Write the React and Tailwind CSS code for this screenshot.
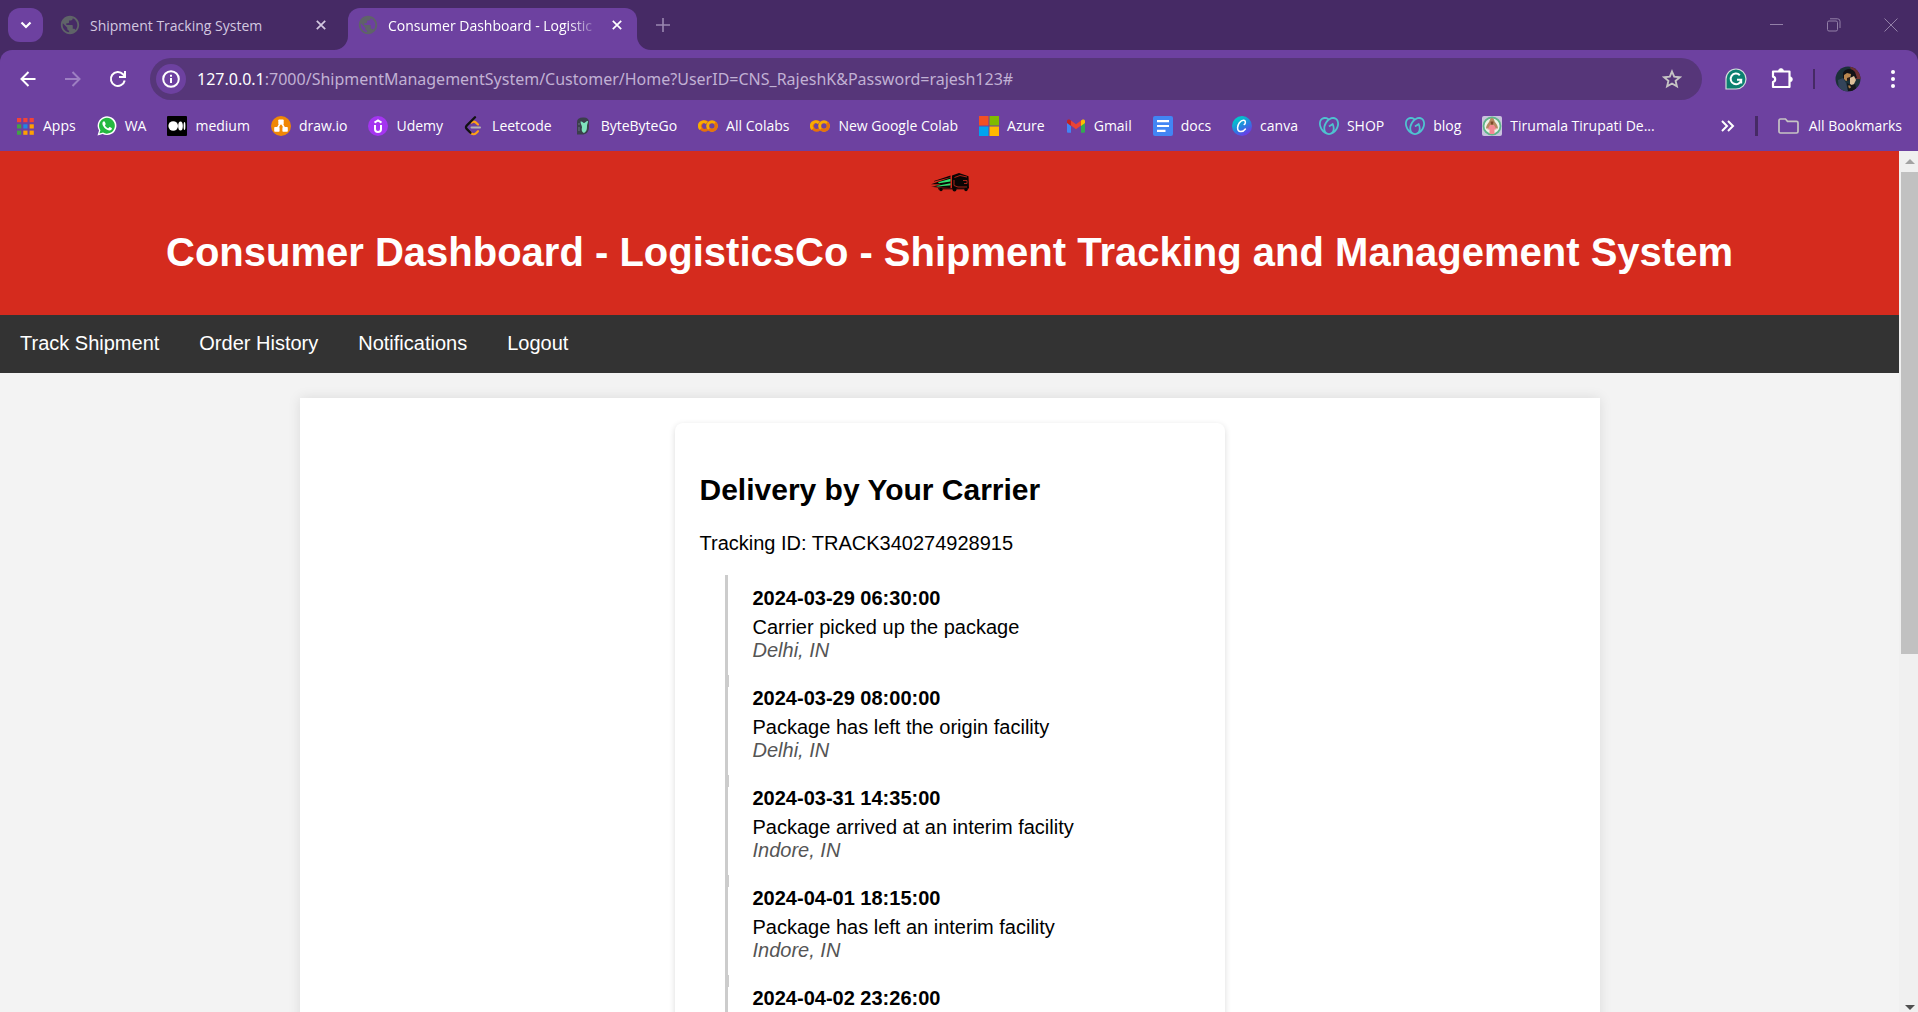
import React from "react";
import { SiGodaddy } from "react-icons/si";
import { MdPublic } from "react-icons/md";

const chromeFont = "font-['Open_Sans','Noto_Sans',sans-serif]";

const AppsIcon = () => (
  <svg viewBox="0 0 20 20" className="size-5">
    {[
      ["#f44336", "#f44336", "#f44336"],
      ["#43a047", "#1e88e5", "#ffa000"],
      ["#43a047", "#ffa000", "#ffa000"],
    ].map((row, r) =>
      row.map((c, i) => <rect key={r + "-" + i} x={2 + i * 6.3} y={2 + r * 6.3} width="4.2" height="4.2" fill={c} />)
    )}
  </svg>
);
const WhatsAppIcon = () => (
  <svg viewBox="0 0 20 20" className="size-5">
    <path d="M.5 19.5 2 14.6A9.4 9.4 0 1 1 5.6 18Z" fill="#fff" />
    <path d="m2.4 17.6 1-3.4A7.9 7.9 0 1 1 6 16.6Z" fill="#25b940" />
    <path d="M7 5.2c-.5 0-1.6.8-1.6 2.3 0 3 4 7 7.200 7 1.500 0 2.300-1 2.300-1.900 0-.4-.2-.5-2.300-1.500-.4-.1-.8 1.200-1.300 1.200-.6 0-3.300-2.200-3.300-2.900 0-.4.8-.9.700-1.400C8.200 6.500 7.800 5.200 7 5.200Z" fill="#fff" />
  </svg>
);
const MediumIcon = () => (
  <svg viewBox="0 0 20 20" className="size-5">
    <rect width="20" height="20" rx="1" fill="#000" />
    <circle cx="6.200" cy="10" r="4.800" fill="#fff" />
    <ellipse cx="13.500" cy="10" rx="2.300" ry="4.500" fill="#fff" />
    <ellipse cx="17.500" cy="10" rx=".9" ry="4" fill="#fff" />
  </svg>
);
const DrawioIcon = () => (
  <svg viewBox="0 0 20 20" className="size-5">
    <circle cx="10" cy="10" r="10" fill="#f08705" />
    <path d="M10 6 6 13M10 6l4 7" stroke="#fff" strokeWidth="1.600" />
    <rect x="7.300" y="3.500" width="5.400" height="5" rx=".8" fill="#fff" />
    <rect x="3.200" y="11" width="5.400" height="4.800" rx=".8" fill="#fff" />
    <rect x="11.400" y="11" width="5.400" height="4.800" rx=".8" fill="#fff" />
  </svg>
);
const UdemyIcon = () => (
  <svg viewBox="0 0 20 20" className="size-5">
    <circle cx="10" cy="10" r="10" fill="#a435f0" />
    <path d="M6.500 6.600 10 4.400l3.500 2.200M7 9v4.300a3 2.700 0 0 0 6 0V9" fill="none" stroke="#fff" strokeWidth="2" />
  </svg>
);
const LeetcodeIcon = () => (
  <svg viewBox="0 0 20 20" className="size-5">
    <path d="m7.500 6.500 1.500-.8c1-.4 2 0 2.700.7L14 8.500M6.500 16.700c1.600 1.900 4 2 5.500.5l2-2" fill="none" stroke="#ffa116" strokeWidth="2.200" strokeLinecap="round" />
    <path d="M11 1.300 2.700 9.600c-1 1-1 2.300 0 3.300l3.800 3.800" fill="none" stroke="#111" strokeWidth="2.300" strokeLinecap="round" />
    <path d="M7.500 11.600h8.500" stroke="#b3b3b3" strokeWidth="2" strokeLinecap="round" />
  </svg>
);
const ByteIcon = () => (
  <svg viewBox="0 0 20 20" className="size-5">
    <path d="M4 6c0-3 2-4.500 6-4.500h1c3 0 5 1.500 5 4.500V11c0 5-3 7.500-7 7.500H4Z" fill="#3b3f4c" />
    <path d="M7.500 5.500c2-.5 2.500 1.500 3.500 1.500s2.500-2.500 4-2c0 2-1 3-1 5 0 2 0 5.500-3 7-2.500-1-2.500-3.500-2-5.500C9 9.500 7.500 8 7.500 5.500Z" fill="#7fe3bd" />
    <path d="M6 7v2M6 11v4" stroke="#6c7484" strokeWidth="1" />
  </svg>
);
const ColabIcon = () => (
  <svg viewBox="0 0 20 20" className="size-5" fill="none" strokeWidth="3">
    <path d="M9.300 6.600A4.300 4.300 0 1 0 9.300 13.400" stroke="#e8710a" />
    <path d="M2.600 13A4.300 4.300 0 0 1 8.700 6.900" stroke="#f9ab00" />
    <circle cx="14" cy="10" r="4.300" stroke="#f9ab00" />
    <path d="M17 6.900A4.300 4.300 0 0 1 10.900 13" stroke="#e8710a" />
  </svg>
);
const AzureIcon = () => (
  <svg viewBox="0 0 20 20" className="size-5">
    <rect width="9.500" height="9.500" fill="#f25022" />
    <rect x="10.500" width="9.500" height="9.500" fill="#7fba00" />
    <rect y="10.500" width="9.500" height="9.500" fill="#00a4ef" />
    <rect x="10.500" y="10.500" width="9.500" height="9.500" fill="#ffb900" />
  </svg>
);
const GmailIcon = () => (
  <svg viewBox="0 0 20 20" className="size-5">
    <path d="M1 5.500v10c0 .8.500 1.300 1.300 1.300H5V8.500Z" fill="#4285f4" />
    <path d="M19 5.500v10c0 .8-.5 1.300-1.300 1.300H15V8.500Z" fill="#34a853" />
    <path d="M5 4.500v5l5 3.700 5-3.700v-5l-5 3.800Z" fill="#ea4335" />
    <path d="M1 5v2l4 3V4.500l-.8-.6C2.800 3 1 3.500 1 5Z" fill="#c5221f" />
    <path d="M19 5v2l-4 3V4.500l.8-.6C17.200 3 19 3.500 19 5Z" fill="#fbbc04" />
  </svg>
);
const DocsIcon = () => (
  <svg viewBox="0 0 20 20" className="size-5">
    <rect width="20" height="20" rx="2" fill="#4285f4" />
    <path d="M4 5.200h12M4 10h12M4 14.800h8.500" stroke="#fff" strokeWidth="2.200" />
  </svg>
);
const CanvaIcon = () => (
  <svg viewBox="0 0 20 20" className="size-5">
    <defs>
      <linearGradient id="canva" x1="0.200" y1="0" x2="0.800" y2="1">
        <stop offset="0.150" stopColor="#00c4cc" />
        <stop offset="0.550" stopColor="#2a7de1" />
        <stop offset="1" stopColor="#7d2ae8" />
      </linearGradient>
    </defs>
    <circle cx="10" cy="10" r="10" fill="url(#canva)" />
    <path d="M12.200 8.500c1.500-.6 1.800-4.200-.6-4.200-3.200 0-6 4-6 7.500 0 5 5.200 4.700 7.800 1.200" fill="none" stroke="#fff" strokeWidth="1.500" strokeLinecap="round" />
  </svg>
);
const GodaddyIcon = () => <SiGodaddy className="size-5 text-[#4fc3d0]" />;
const TirumalaIcon = () => (
  <svg viewBox="0 0 20 20" className="size-5">
    <rect width="20" height="20" rx="2" fill="#c9c3dd" />
    <circle cx="10" cy="10" r="8.500" fill="#eef2e8" stroke="#5fb58a" strokeWidth="1.800" />
    <path d="M10 2c2 0 2.200 2.500 3 4 1.500 2 3 4 3 6.500H4C4 10 5.500 8 7 6c.8-1.500 1-4 3-4Z" fill="#b58a62" />
    <path d="M8.500 5.500h3l-.5 3H9Z" fill="#7c4a2b" />
    <path d="M8 9h4l2.500 4.500H12.500V18h-5v-4.500H5.500Z" fill="#f58a94" />
  </svg>
);

const bookmarks = [
  ["Apps", AppsIcon],
  ["WA", WhatsAppIcon],
  ["medium", MediumIcon],
  ["draw.io", DrawioIcon],
  ["Udemy", UdemyIcon],
  ["Leetcode", LeetcodeIcon],
  ["ByteByteGo", ByteIcon],
  ["All Colabs", ColabIcon],
  ["New Google Colab", ColabIcon],
  ["Azure", AzureIcon],
  ["Gmail", GmailIcon],
  ["docs", DocsIcon],
  ["canva", CanvaIcon],
  ["SHOP", GodaddyIcon],
  ["blog", GodaddyIcon],
  ["Tirumala Tirupati De...", TirumalaIcon],
];

const CloseGlyph = () => (
  <svg viewBox="0 0 10 10" className="size-[10px]">
    <path d="m.8.8 8.400 8.400M9.200.8.8 9.200" stroke="currentColor" strokeWidth="1.700" />
  </svg>
);

function TabStrip() {
  return (
    <div className="flex h-[50px] shrink-0 items-end bg-[#462a65]">
      <button aria-label="Search tabs" className="mb-2 ml-2 flex h-[34px] w-[35px] items-center justify-center rounded-xl bg-[#6d41a0] text-white">
        <svg viewBox="0 0 12 8" className="h-2 w-3"><path d="m1.500 1.500 4.500 4.500 4.500-4.500" fill="none" stroke="currentColor" strokeWidth="2.200" /></svg>
      </button>
      <div className="flex h-[42px] w-[305px] items-center pr-[22px] pl-4 pb-2 text-[#d3c8e0]">
        <MdPublic className="size-[22px] text-[#5f6368]" />
        <span className="ml-[9px] flex-1 truncate text-[14px]">Shipment Tracking System</span>
        <button aria-label="Close Shipment Tracking System"><CloseGlyph /></button>
      </div>
      <div className="relative flex h-[42px] w-[289px] items-center rounded-t-xl bg-[#6d41a0] pr-[15px] pb-2 pl-[9px] text-white">
        <svg viewBox="0 0 14 14" className="absolute bottom-0 -left-3.5 size-3.5"><path d="M14 0v14H0A14 14 0 0 0 14 0Z" fill="#6d41a0" /></svg>
        <svg viewBox="0 0 14 14" className="absolute -right-3.5 bottom-0 size-3.5"><path d="M0 0v14h14A14 14 0 0 1 0 0Z" fill="#6d41a0" /></svg>
        <MdPublic className="size-[22px] shrink-0 text-[#5f6368]" />
        <span className="ml-[9px] whitespace-nowrap text-[14px] [mask-image:linear-gradient(to_right,#000_180px,transparent_212px)]">Consumer Dashboard - Logistic</span>
        <button aria-label="Close Consumer Dashboard" className="ml-auto"><CloseGlyph /></button>
      </div>
      <button aria-label="New tab" className="mb-[18px] ml-[19px] text-[#9b88b1]">
        <svg viewBox="0 0 14 14" className="size-3.5"><path d="M7 0v14M0 7h14" stroke="currentColor" strokeWidth="1.600" /></svg>
      </button>
      <div className="mb-[18px] ml-auto flex items-center gap-[43px] pr-5 text-[#9380a8]">
        <button aria-label="Minimize"><svg viewBox="0 0 14 14" className="size-3.5"><path d="M0 6.500h13" stroke="currentColor" /></svg></button>
        <button aria-label="Restore"><svg viewBox="0 0 14 14" className="size-3.5" fill="none" stroke="currentColor"><rect x=".5" y="3" width="10" height="10" rx="1.500" /><path d="M3 .8h7.500A2.500 2.500 0 0 1 13 3.300V10" /></svg></button>
        <button aria-label="Close window"><svg viewBox="0 0 14 14" className="size-3.5"><path d="m.5.5 13 13M13.500.5l-13 13" stroke="currentColor" /></svg></button>
      </div>
    </div>
  );
}

function Toolbar() {
  return (
    <div className="flex h-[58px] shrink-0 items-center rounded-t-xl bg-[#6d41a0] pl-[19px] text-white">
      <div className="flex w-[131px] items-center gap-[27px]">
        <button aria-label="Back"><svg viewBox="0 0 18 18" className="size-[18px]" fill="none" stroke="currentColor" strokeWidth="2"><path d="M16.500 9H3M9.500 2 2.500 9l7 7" /></svg></button>
        <button aria-label="Forward" className="text-[#9d7fc2]"><svg viewBox="0 0 18 18" className="size-[18px]" fill="none" stroke="currentColor" strokeWidth="2"><path d="M1 9h14M8.500 2l7 7-7 7" /></svg></button>
        <button aria-label="Reload"><svg viewBox="0 0 18 18" className="size-[18px]" fill="none" stroke="currentColor" strokeWidth="2"><path d="M15.700 10.500A7 7 0 1 1 14 4.200l1.500 1.600" /><path d="M16 1v6h-6" /></svg></button>
      </div>
      <div className="flex h-[42px] flex-1 items-center rounded-full bg-[#563679] pr-5 pl-1.5">
        <button aria-label="Site information" className="flex size-[30px] items-center justify-center rounded-full bg-[#6d41a0]">
          <svg viewBox="0 0 18 18" className="size-[18px]" fill="none" stroke="currentColor" strokeWidth="2"><circle cx="9" cy="9" r="7.800" /><path d="M9 8v5M9 4.800v2" /></svg>
        </button>
        <div className="ml-[11px] flex-1 truncate font-['Noto_Sans',sans-serif] text-[16px] text-[#c1b1d4]" role="textbox" aria-label="Address">
          <span className="text-white">127.0.0.1</span>:7000/ShipmentManagementSystem/Customer/Home?UserID=CNS_RajeshK&amp;Password=rajesh123#
        </div>
        <button aria-label="Bookmark this page" className="text-[#c6c4c4]"><svg viewBox="0 0 20 20" className="size-5" fill="none" stroke="currentColor" strokeWidth="1.900"><path d="m10 2.500 2.200 5.200 5.700.5-4.300 3.700 1.300 5.500L10 14.500l-4.900 2.900 1.300-5.500-4.300-3.700 5.700-.5Z" /></svg></button>
      </div>
      <div className="flex w-[216px] items-center pl-[23px]">
        <button aria-label="Grammarly">
          <svg viewBox="0 0 22 22" className="size-[22px]"><path d="M1 21V11a10 10 0 1 1 10 10Z" fill="#0b8070" stroke="#d5dedd" strokeWidth="1.200" /><path d="M14.800 7.200A5.300 5.300 0 1 0 16.200 11.800H12M16.200 11.800v3.700" fill="none" stroke="#fff" strokeWidth="2" /></svg>
        </button>
        <button aria-label="Extensions" className="ml-6">
          <svg viewBox="0 0 22 22" className="size-[22px]"><path d="M2 3.500h16.500V19H2v-5a2.700 2.700 0 0 0 0-5.300Z" fill="none" stroke="currentColor" strokeWidth="2.200" strokeLinejoin="round" /><path d="M7.500 3a2.500 2.500 0 0 1 5 0ZM19 8.800a2.500 2.500 0 0 1 0 5Z" fill="currentColor" stroke="currentColor" strokeWidth=".6" /></svg>
        </button>
        <span className="ml-5 h-5 w-0.5 bg-[#462a65]" />
        <button aria-label="Profile" className="ml-5">
          <svg viewBox="0 0 26 26" className="size-[26px]">
            <defs><clipPath id="avatar"><circle cx="13" cy="13" r="12.500" /></clipPath></defs>
            <g clipPath="url(#avatar)">
              <rect width="26" height="26" fill="#1b3038" />
              <path d="M15 1h11v12h-6Z" fill="#6b3033" />
              <path d="M8 7c2-5 9-5 12-1l2 6-4 1-4-4-4 5-2-2Z" fill="#101216" />
              <path d="m9 9 3-2 4 1-1 5-4 2-2-2Z" fill="#b9874f" />
              <path d="m15 12 4-2 2 4-3 6-3-2Z" fill="#dcc09a" />
              <path d="m12 12 3-1v3l-3 1Z" fill="#2a1c16" />
              <path d="M3 14l5-2 3 5 2 8H4Z" fill="#33445a" />
              <path d="m12 17 4 2 4-1 2 7h-9Z" fill="#14161b" />
              <path d="M13 19.500h2l1 2-2 1Z" fill="#a97c48" />
            </g>
          </svg>
        </button>
        <button aria-label="Menu" className="ml-[30px]"><svg viewBox="0 0 4 20" className="h-5 w-1" fill="currentColor"><circle cx="2" cy="3" r="2" /><circle cx="2" cy="10" r="2" /><circle cx="2" cy="17" r="2" /></svg></button>
      </div>
    </div>
  );
}

function BookmarkBar() {
  return (
    <nav aria-label="Bookmarks" className="flex h-[43px] shrink-0 items-center bg-[#6d41a0] pr-4 pb-2 pl-[15px] text-[14px] text-white">
      <div className="flex items-center gap-[21px]">
        {bookmarks.map(([name, Icon]) => (
          <a key={name} href="#" className="flex shrink-0 items-center gap-2 whitespace-nowrap"><Icon />{name}</a>
        ))}
      </div>
      <button aria-label="More bookmarks" className="ml-auto"><svg viewBox="0 0 14 12" className="h-3 w-3.5" fill="none" stroke="currentColor" strokeWidth="2"><path d="m1 1 5 5-5 5M7 1l5 5-5 5" /></svg></button>
      <span className="mx-5 h-5 w-[3px] bg-[#462a65]" />
      <a href="#" className="flex items-center gap-2.5 whitespace-nowrap">
        <svg viewBox="0 0 21 16" className="h-4 w-[21px]" fill="none" stroke="#c6c4c4" strokeWidth="1.700"><path d="M1 2.500Q1 1 2.500 1h5l2 2.300h9Q20 3.300 20 4.800v8.700q0 1.500-1.500 1.500h-16Q1 15 1 13.500Z" /></svg>
        All Bookmarks
      </a>
    </nav>
  );
}

const events = [
  ["2024-03-29 06:30:00", "Carrier picked up the package", "Delhi, IN"],
  ["2024-03-29 08:00:00", "Package has left the origin facility", "Delhi, IN"],
  ["2024-03-31 14:35:00", "Package arrived at an interim facility", "Indore, IN"],
  ["2024-04-01 18:15:00", "Package has left an interim facility", "Indore, IN"],
  ["2024-04-02 23:26:00", null, null],
];

const TruckLogo = () => (
  <svg viewBox="0 0 40 20" className="h-5 w-10">
    <path d="M4 9 20.500 3.500v1.800L4 9.600ZM1 14.800l19.500-1.300V16L8 15.500Z" fill="#0a0504" />
    <path d="M1 12.200 20.500 5.500v8L3 14.500l8-2.300Z" fill="#0a0504" />
    <path d="m8 10.300 12.500-3.600v2.800L9 11.200ZM6 14l14.500-2.800v2L8 14.500Z" fill="#2fe070" />
    <path d="M22 3.500 29 1l9.500 3.200.5 12.300H22Z" fill="#0a0504" />
    <path d="M24.500 5.500 30 3.500l7 1.500" fill="none" stroke="#d52b1e" strokeWidth=".8" />
    <path d="M24 8v5.500l4 1.500h9M33 8.500h4v3h-3" fill="none" stroke="#b5281c" strokeWidth=".9" />
    <path d="M8 16.800h30" stroke="#0a0504" strokeWidth="1" />
    <circle cx="11" cy="17.500" r="1.700" fill="#0a0504" /><circle cx="24.500" cy="17.500" r="2" fill="#0a0504" /><circle cx="36" cy="17.500" r="1.700" fill="#0a0504" />
  </svg>
);

function Dashboard() {
  return (
    <div className="min-w-0 flex-1 overflow-hidden bg-[#f3f3f3] font-['Liberation_Sans',Arial,sans-serif] text-[20px] leading-[23px] text-black">
      <header className="flex flex-col items-center bg-[#d52b1e] pt-[21px] pb-10 text-white">
        <TruckLogo />
        <h1 className="mt-[38px] text-center text-[40px] leading-[45px] font-bold">Consumer Dashboard - LogisticsCo - Shipment Tracking and Management System</h1>
      </header>
      <nav aria-label="Dashboard" className="flex gap-10 bg-[#333] px-5 pt-[17px] pb-[18px] text-white">
        {["Track Shipment", "Order History", "Notifications", "Logout"].map((t) => <a key={t} href="#">{t}</a>)}
      </nav>
      <main className="mx-auto mt-[25px] max-w-[1300px] bg-white p-[25px] shadow-[0_0_12px_rgba(0,0,0,0.1)]">
        <section className="mx-auto max-w-[550px] rounded-lg bg-white p-[25px] shadow-[0_2px_6px_rgba(0,0,0,0.15)]">
          <h2 className="mt-[25px] text-[30px] leading-[34px] font-bold">Delivery by Your Carrier</h2>
          <p className="mt-[25px]">Tracking ID: TRACK340274928915</p>
          <ol className="mt-5 ml-[25px] border-l-[3px] border-[#ccc]">
            {events.map(([time, text, place]) => (
              <li key={time} className="relative py-3 pl-[25px] before:absolute before:top-0 before:left-0 before:h-3 before:w-px before:bg-[#ccc] first:before:hidden">
                <p className="font-bold">{time}</p>
                {text && <p className="mt-1.5">{text}</p>}
                {place && <p className="pb-[1px] text-[#555] italic">{place}</p>}
              </li>
            ))}
          </ol>
        </section>
      </main>
    </div>
  );
}

function ScrollTrack() {
  return (
    <div aria-hidden="true" className="flex w-[19px] shrink-0 flex-col items-end bg-[#f0f0f0]">
      <div className="flex h-[21px] w-[17px] items-center justify-center"><svg viewBox="0 0 10 5" className="h-[5px] w-[10px]"><path d="m5 0 5 5H0Z" fill="#a3a3a3" /></svg></div>
      <div className="h-[56%] w-[17px] bg-[#c1c1c1]" />
      <div className="mt-auto flex w-[17px] justify-center pb-0.5"><svg viewBox="0 0 10 5" className="h-[5px] w-[10px]"><path d="M0 0h10L5 5Z" fill="#505050" /></svg></div>
    </div>
  );
}

export default function App() {
  return (
    <div className="flex h-screen flex-col overflow-hidden bg-[#462a65]">
      <div className={chromeFont}>
        <TabStrip />
        <Toolbar />
        <BookmarkBar />
      </div>
      <div className="flex min-h-0 flex-1">
        <Dashboard />
        <ScrollTrack />
      </div>
    </div>
  );
}
